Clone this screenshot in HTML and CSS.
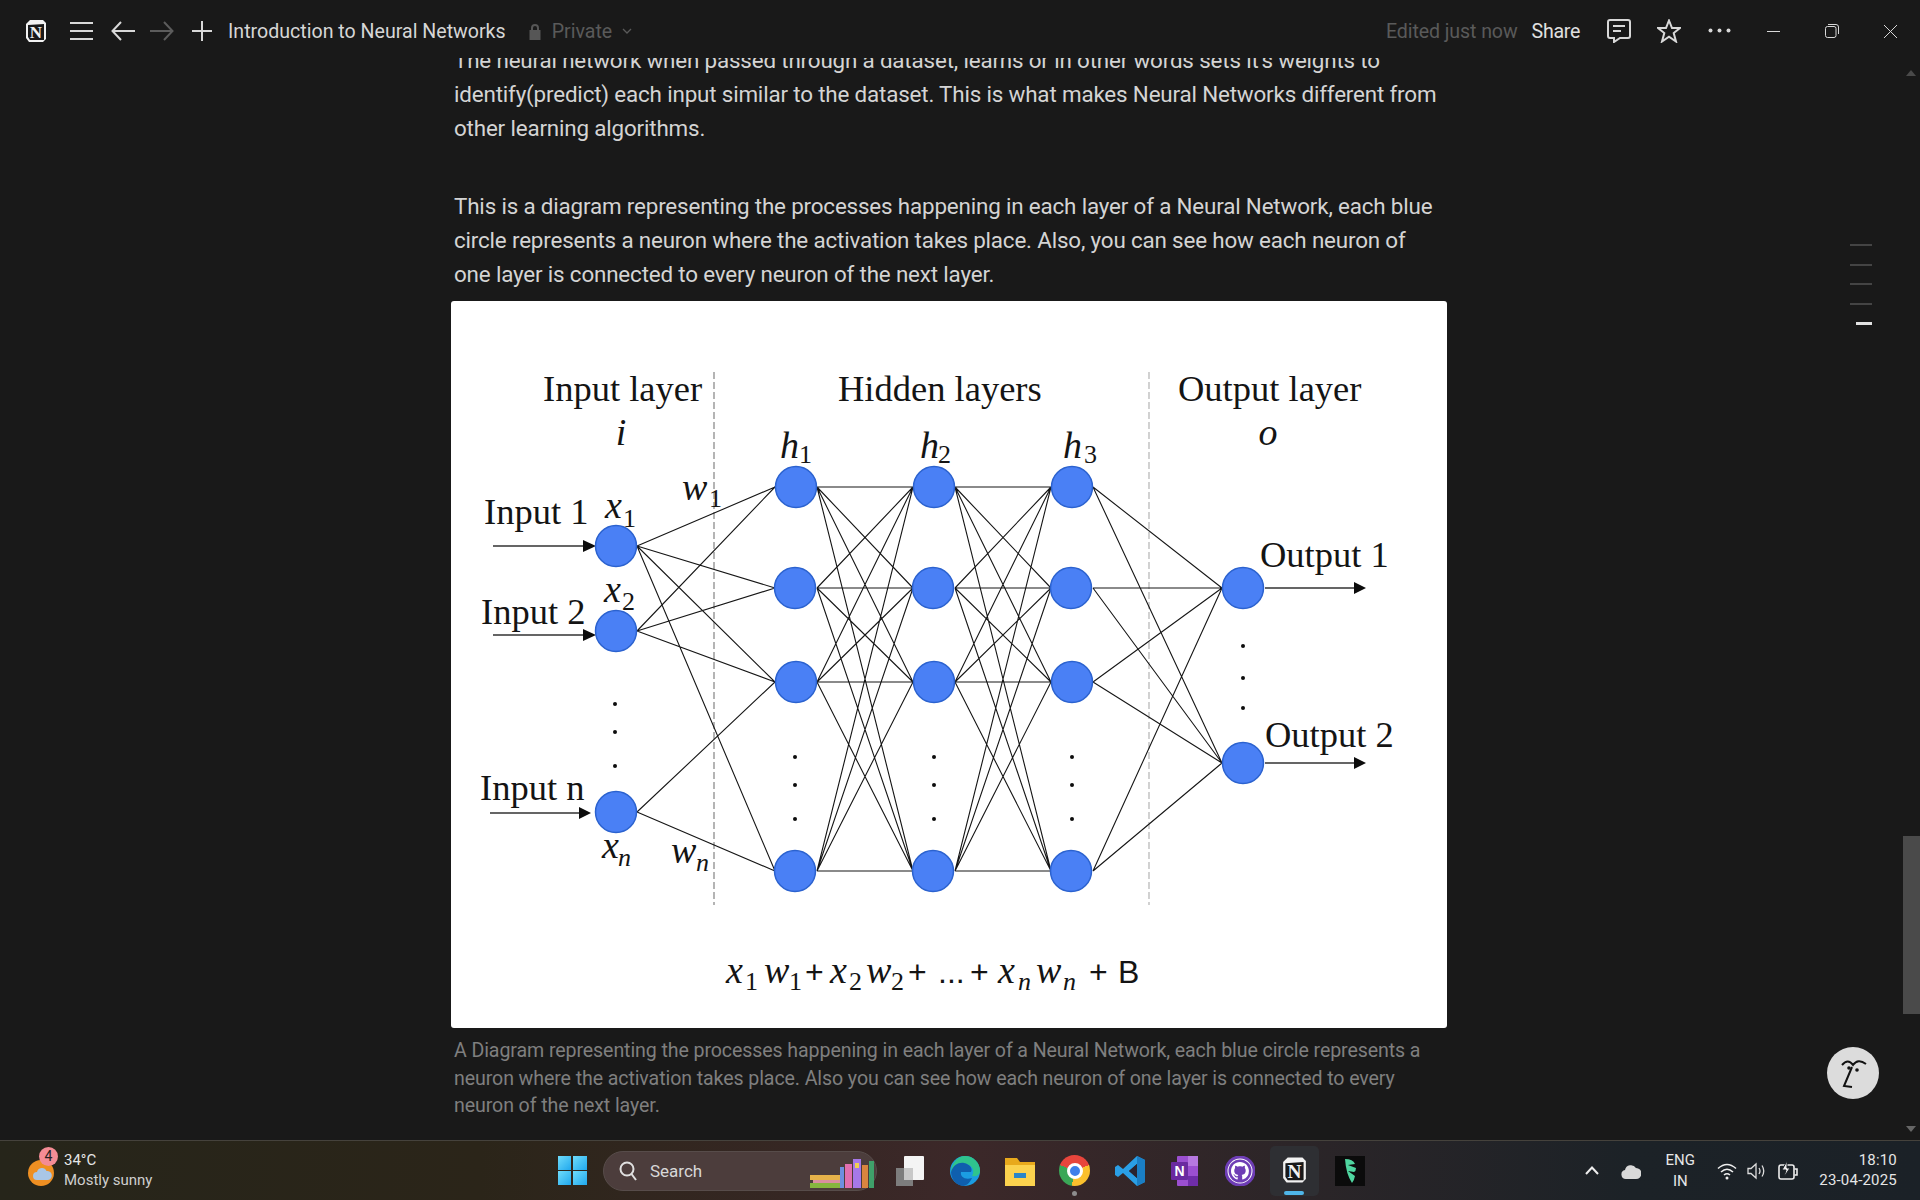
FILE: index.html
```html
<!DOCTYPE html>
<html lang="en">

<head>
    <meta charset="UTF-8">
    <meta name="viewport" content="width=device-width, initial-scale=1.0">
    <title>Introduction to Neural Networks</title>
    <link rel="stylesheet" href="styles.css">
</head>

<body>
    <div id="app">
        <header id="topbar">
            <svg class="ico ico-logo" viewBox="0 0 22 24">
                <path d="M1 5 L5 1 L18 1 L21 4 L21 20 L18 23 L4 23 L1 19 Z" fill="#f2f2f2" />
                <path d="M3 6 L19 5 L19 21 L5 21 L3 18 Z" fill="#191919" />
                <text x="11" y="19" class="logo-n">N</text>
            </svg>
            <svg class="ico ico-burger" viewBox="0 0 23 20">
                <path d="M0 2H23M0 10H23M0 18H23" />
            </svg>
            <svg class="ico ico-back" viewBox="0 0 24 20">
                <path d="M24 10H2M10 1L1.500 10L10 19" />
            </svg>
            <svg class="ico ico-fwd" viewBox="0 0 24 20">
                <path d="M0 10H22M14 1L22.500 10L14 19" />
            </svg>
            <svg class="ico ico-plus" viewBox="0 0 20 20">
                <path d="M10 0V20M0 10H20" />
            </svg>
            <span class="page-title">Introduction to Neural Networks</span>
            <svg class="ico-lock" viewBox="0 0 14 17">
                <path d="M3 7V5a4 4 0 0 1 8 0v2h1.500v10h-11V7Zm2 0h4V5a2 2 0 0 0-4 0Z" />
            </svg>
            <span class="private">Private</span>
            <svg class="ico ico-chev" viewBox="0 0 10 6">
                <path d="M1 1L5 5L9 1" />
            </svg>

            <div class="top-right">
                <span class="edited">Edited just now</span>
                <span class="share">Share</span>
                <svg class="ico ico-comment" viewBox="0 0 24 24">
                    <path d="M3 1H21Q23 1 23 3V17Q23 19 21 19H13L7 23V19H3Q1 19 1 17V3Q1 1 3 1Z" />
                    <path d="M6 7H18M6 12H14" />
                </svg>
                <svg class="ico ico-star" viewBox="0 0 24 24">
                    <path d="M12 1.500L15 9H23L16.700 14L19 22.500L12 17.600L5 22.500L7.300 14L1 9H9Z" />
                </svg>
                <svg class="ico-dots" viewBox="0 0 23 5">
                    <circle cx="2.500" cy="2.500" r="2" />
                    <circle cx="11.500" cy="2.500" r="2" />
                    <circle cx="20.500" cy="2.500" r="2" />
                </svg>
                <svg class="ico win-min" viewBox="0 0 13 13">
                    <path d="M0 6.500H13" />
                </svg>
                <svg class="ico win-max" viewBox="0 0 14 14">
                    <rect x="0.500" y="2.500" width="10.500" height="11" rx="2" />
                    <path d="M3 0.500H11Q13.500 0.500 13.500 3V10" />
                </svg>
                <svg class="ico win-close" viewBox="0 0 13 13">
                    <path d="M0 0L13 13M13 0L0 13" />
                </svg>
            </div>
        </header>

        <main id="main">
            <div id="scroller">
                <article id="doc">
                    <p class="para">The neural network when passed through a dataset, learns or in other words sets it's weights to identify(predict) each input similar to the dataset. This is what makes Neural Networks different from other learning algorithms.</p>
                    <p class="para para-next">This is a diagram representing the processes happening in each layer of a Neural Network, each blue circle represents a neuron where the activation takes place. Also, you can see how each neuron of one layer is connected to every neuron of the next layer.</p>

                    <figure class="figure">
                        <svg class="diagram" viewBox="451 301 996 727">
                            <path class="sep" d="M714 372V905" />
                            <path class="sep sep-thin" d="M1149 372V905" />

                            <g class="edges">
                                <path d="M637 546L775 487M637 546L775 588M637 546L775 682M637 546L775 871M637 631L775 487M637 631L775 588M637 631L775 682M637 812L775 682M637 812L775 871" />
                                <path d="M817 487L913 487M817 487L913 588M817 487L913 682M817 487L913 871M817 588L913 487M817 588L913 588M817 588L913 682M817 588L913 871M817 682L913 487M817 682L913 588M817 682L913 682M817 682L913 871M817 871L913 487M817 871L913 588M817 871L913 682M817 871L913 871" />
                                <path d="M955 487L1051 487M955 487L1051 588M955 487L1051 682M955 487L1051 871M955 588L1051 487M955 588L1051 588M955 588L1051 682M955 588L1051 871M955 682L1051 487M955 682L1051 588M955 682L1051 682M955 682L1051 871M955 871L1051 487M955 871L1051 588M955 871L1051 682M955 871L1051 871" />
                                <path d="M1093 487L1222 588M1093 487L1222 763M1093 588L1222 588M1093 588L1222 763M1093 682L1222 588M1093 682L1222 763M1093 871L1222 588M1093 871L1222 763" />
                            </g>

                            <g class="arrows">
                                <path d="M493 546H590M493 635H590M490 813H585M1265 588H1360M1265 763H1360" />
                            </g>
                            <g class="heads">
                                <path d="M583 540L596 546L583 552Z" />
                                <path d="M583 629L596 635L583 641Z" />
                                <path d="M579 807L591 813L579 819Z" />
                                <path d="M1354 582L1366 588L1354 594Z" />
                                <path d="M1354 757L1366 763L1354 769Z" />
                            </g>

                            <g class="node">
                                <circle cx="616" cy="546" r="20.500" />
                                <circle cx="616" cy="631" r="20.500" />
                                <circle cx="616" cy="812" r="20.500" />
                                <circle cx="796" cy="487" r="20.500" />
                                <circle cx="795" cy="588" r="20.500" />
                                <circle cx="796" cy="682" r="20.500" />
                                <circle cx="795" cy="871" r="20.500" />
                                <circle cx="934" cy="487" r="20.500" />
                                <circle cx="933" cy="588" r="20.500" />
                                <circle cx="934" cy="682" r="20.500" />
                                <circle cx="933" cy="871" r="20.500" />
                                <circle cx="1072" cy="487" r="20.500" />
                                <circle cx="1071" cy="588" r="20.500" />
                                <circle cx="1072" cy="682" r="20.500" />
                                <circle cx="1071" cy="871" r="20.500" />
                                <circle cx="1243" cy="588" r="20.500" />
                                <circle cx="1243" cy="763" r="20.500" />
                            </g>

                            <g class="dots">
                                <circle cx="615" cy="704" r="2" />
                                <circle cx="615" cy="732" r="2" />
                                <circle cx="615" cy="766" r="2" />
                                <circle cx="795" cy="757" r="2" />
                                <circle cx="795" cy="785" r="2" />
                                <circle cx="795" cy="819" r="2" />
                                <circle cx="934" cy="757" r="2" />
                                <circle cx="934" cy="785" r="2" />
                                <circle cx="934" cy="819" r="2" />
                                <circle cx="1072" cy="757" r="2" />
                                <circle cx="1072" cy="785" r="2" />
                                <circle cx="1072" cy="819" r="2" />
                                <circle cx="1243" cy="646" r="2" />
                                <circle cx="1243" cy="678" r="2" />
                                <circle cx="1243" cy="708" r="2" />
                            </g>

                            <g class="lbl">
                                <text x="543" y="401">Input layer</text>
                                <text x="838" y="401">Hidden layers</text>
                                <text x="1178" y="401">Output layer</text>
                                <text x="484" y="524">Input 1</text>
                                <text x="481" y="624">Input 2</text>
                                <text x="480" y="800">Input n</text>
                                <text x="1260" y="567">Output 1</text>
                                <text x="1265" y="747">Output 2</text>
                            </g>

                            <g class="math">
                                <text x="621" y="445" text-anchor="middle">i</text>
                                <text x="1268" y="445" text-anchor="middle">o</text>
                                <text x="780" y="458">h</text>
                                <text x="920" y="458">h</text>
                                <text x="1063" y="458">h</text>
                                <text x="605" y="518">x</text>
                                <text x="604" y="602">x</text>
                                <text x="602" y="858">x</text>
                                <text x="682" y="500">w</text>
                                <text x="671" y="863">w</text>
                            </g>
                            <g class="sub">
                                <text x="799" y="463">1</text>
                                <text x="938" y="463">2</text>
                                <text x="1084" y="463">3</text>
                                <text x="623" y="527">1</text>
                                <text x="622" y="610">2</text>
                                <text x="709" y="507">1</text>
                                <text class="sub-n" x="618" y="866">n</text>
                                <text class="sub-n" x="696" y="871">n</text>
                            </g>

                            <g class="math">
                                <text x="726" y="983">x</text>
                                <text x="764" y="983">w</text>
                                <text x="830" y="983">x</text>
                                <text x="866" y="983">w</text>
                                <text x="998" y="983">x</text>
                                <text x="1036" y="983">w</text>
                            </g>
                            <g class="sub">
                                <text x="745" y="990">1</text>
                                <text x="789" y="990">1</text>
                                <text x="849" y="990">2</text>
                                <text x="891" y="990">2</text>
                                <text class="sub-n" x="1018" y="990">n</text>
                                <text class="sub-n" x="1063" y="990">n</text>
                            </g>
                            <g class="formula">
                                <text x="805" y="983">+</text>
                                <text x="908" y="983">+</text>
                                <text x="938" y="983">...</text>
                                <text x="970" y="983">+</text>
                                <text x="1089" y="983">+</text>
                                <text x="1118" y="983">B</text>
                            </g>
                        </svg>
                    </figure>
                    <p class="caption">A Diagram representing the processes happening in each layer of a Neural Network, each blue circle represents a neuron where the activation takes place. Also you can see how each neuron of one layer is connected to every neuron of the next layer.</p>
                </article>
            </div>

            <aside id="rail">
                <span class="rail-up"></span>
                <span class="rail-thumb"></span>
                <span class="rail-down"></span>
            </aside>

            <!-- page outline, floats over the page -->
            <div class="outline">
                <i></i><i></i><i></i><i></i><i class="on"></i>
            </div>

            <div class="help">
                <svg viewBox="0 0 52 52">
                    <path d="M15 18Q21 11 26 18Q31 11 39 17" />
                    <path d="M25 20L17 39L25 40" />
                    <circle cx="22" cy="21" r="1.800" />
                    <circle cx="30" cy="23" r="1.800" />
                </svg>
            </div>
        </main>

        <footer id="taskbar">
            <div class="weather">
                <div class="weather-ico">
                    <svg viewBox="0 0 26 28">
                        <circle cx="13" cy="14" r="13" fill="#ee8f22" />
                        <path d="M9 21a4 4 0 0 1 0-8 5 5 0 0 1 9.500-1 4.500 4.500 0 0 1 1.500 9Z" fill="#a9c6e6" />
                    </svg>
                    <span class="badge">4</span>
                </div>
                <div class="weather-text">
                    <div class="temp">34°C</div>
                    <div class="cond">Mostly sunny</div>
                </div>
            </div>

            <div class="task task-win">
                <div class="winlogo"><i></i><i></i><i></i><i></i></div>
            </div>

            <div class="search">
                <svg class="search-ico" viewBox="0 0 18 20">
                    <circle cx="8" cy="8" r="6.500" />
                    <path d="M12.500 13L17 19" />
                </svg>
                <span>Search</span>
                <svg class="books" viewBox="0 0 66 30">
                    <rect x="0" y="17" width="32" height="5" fill="#e6b24a" />
                    <rect x="3" y="22" width="29" height="3" fill="#d98fa0" />
                    <rect x="0" y="25" width="32" height="5" fill="#86b63f" />
                    <rect x="30" y="9" width="4" height="21" fill="#6d8fe0" />
                    <rect x="35" y="6" width="7" height="24" fill="#e06fb0" />
                    <rect x="43" y="1" width="8" height="29" fill="#a678e8" />
                    <rect x="45" y="5" width="4" height="5" fill="#f0d050" />
                    <rect x="52" y="7" width="6" height="23" fill="#d9853f" />
                    <rect x="59" y="3" width="5" height="27" fill="#3fa06a" />
                </svg>
            </div>

            <div class="task">
                <svg class="app" viewBox="0 0 28 30">
                    <rect x="0" y="12" width="17" height="18" fill="#7d7d7d" />
                    <rect x="8" y="0" width="20" height="24" rx="1" fill="#f4f4f4" />
                    <rect x="8" y="12" width="9" height="12" fill="#c8c8c8" />
                </svg>
            </div>
            <div class="task">
                <svg class="app" viewBox="0 0 30 30">
                    <circle cx="15" cy="15" r="15" fill="#1b9de2" />
                    <path d="M15 0A15 15 0 0 1 30 15C30 19 26 21 22 20C26 13 20 7 13 8C8 9 4 12 1 17C1 8 7 0 15 0Z" fill="#2fc48d" />
                    <path d="M1 16C3 9 9 6 14 7C20 8 23 13 21 16H11C10 21 15 24 22 22C20 27 16 30 13 30C6 29 1 23 1 16Z" fill="#0f5fae" />
                </svg>
            </div>
            <div class="task">
                <svg class="app" viewBox="0 0 30 30">
                    <path d="M0 2H12L15 6H30V30H0Z" fill="#e8a91c" />
                    <rect x="0" y="9" width="30" height="21" fill="#fbd24e" />
                    <rect x="9" y="17" width="12" height="5" fill="#2a86c8" />
                </svg>
            </div>
            <div class="task task-dot">
                <div class="chrome"><i></i></div>
                <span class="run-dot"></span>
            </div>
            <div class="task">
                <svg class="app" viewBox="0 0 30 30">
                    <path d="M22 0L30 4V26L22 30L8 17L3 21L0 19V11L3 9L8 13ZM22 8L14 15L22 22Z" fill="#2a9fe6" />
                    <path d="M22 0L30 4V26L22 30Z" fill="#1a7ec4" />
                    <path d="M22 8L14 15L22 22Z" fill="#2a2430" />
                </svg>
            </div>
            <div class="task">
                <svg class="app" viewBox="0 0 30 30">
                    <rect x="7" y="0" width="21" height="30" rx="1" fill="#9b4fd0" />
                    <rect x="18" y="0" width="10" height="10" fill="#b678e0" />
                    <rect x="18" y="20" width="10" height="10" fill="#6f2da8" />
                    <rect x="1" y="6" width="17" height="18" rx="1" fill="#6a2aa0" />
                    <text x="9.500" y="20" class="onenote-n">N</text>
                </svg>
            </div>
            <div class="task">
                <svg class="app" viewBox="0 0 30 30">
                    <circle cx="15" cy="15" r="14" fill="#fff" stroke="#6e3db5" stroke-width="3" />
                    <circle cx="15" cy="15" r="11.500" fill="#6e3db5" />
                    <path transform="translate(6 6) scale(1.120)" fill="#fff" d="M8 0C3.580 0 0 3.580 0 8c0 3.540 2.290 6.530 5.470 7.590.4.070.55-.17.55-.38 0-.19-.01-.82-.01-1.490-2.010.37-2.530-.49-2.690-.94-.09-.23-.48-.94-.82-1.130-.28-.15-.68-.52-.01-.53.63-.01 1.080.58 1.230.82.720 1.210 1.870.87 2.330.66.070-.52.28-.87.51-1.070-1.780-.2-3.640-.89-3.640-3.950 0-.87.31-1.590.82-2.150-.08-.2-.36-1.020.08-2.120 0 0 .67-.21 2.200.82.64-.18 1.320-.27 2-.27.68 0 1.360.09 2 .27 1.530-1.040 2.200-.82 2.200-.82.44 1.100.16 1.920.08 2.120.51.56.82 1.270.82 2.150 0 3.070-1.870 3.750-3.650 3.950.29.25.54.73.54 1.480 0 1.070-.01 1.930-.01 2.200 0 .21.15.46.55.38A8.013 8.013 0 0016 8c0-4.420-3.580-8-8-8z" />
                </svg>
            </div>
            <div class="task task-active">
                <svg class="app-notion" viewBox="0 0 22 24">
                    <path d="M1 5 L5 1 L18 1 L21 4 L21 20 L18 23 L4 23 L1 19 Z" fill="#f2f2f2" />
                    <path d="M3 6 L19 5 L19 21 L5 21 L3 18 Z" fill="#191919" />
                    <text x="11" y="19" class="logo-n">N</text>
                </svg>
                <span class="active-bar"></span>
            </div>
            <div class="task">
                <svg class="app" viewBox="0 0 30 30">
                    <rect width="30" height="30" fill="#0b0b0b" />
                    <path d="M10 3Q18 3 20 8L13 9L21 12Q21 15 19 16L13 15L20 20Q19 25 17 27Q11 18 10 3Z" fill="#4fd6a0" />
                </svg>
            </div>

            <div class="tray">
                <svg class="tray-chev" viewBox="0 0 14 9">
                    <path d="M1 8L7 1.500L13 8" />
                </svg>
                <svg class="tray-cloud" viewBox="0 0 20 16">
                    <path d="M5 16a4.500 4.500 0 0 1-1-8.900A6 6 0 0 1 15 5a5.500 5.500 0 0 1 0 11Z" />
                </svg>
                <div class="lang"><div>ENG</div><div>IN</div></div>
                <svg class="tray-wifi" viewBox="0 0 20 18">
                    <path d="M1 6.500Q10-1.500 19 6.500M4 10Q10 4.500 16 10M7 13Q10 10.500 13 13" />
                    <circle cx="10" cy="16" r="1.500" />
                </svg>
                <svg class="tray-vol" viewBox="0 0 19 18">
                    <path d="M1 6.500H4L9 2V16L4 11.500H1Z" />
                    <path d="M12 6Q14 9 12 12M15 3.500Q18.500 9 15 14.500" />
                </svg>
                <svg class="tray-batt" viewBox="0 0 20 20">
                    <rect x="1" y="4" width="15" height="14" rx="2" />
                    <path d="M16.500 8H19V14H16.500" />
                    <path class="bolt" d="M9 0L4 9H8L6 16L12 7H9Z" />
                </svg>
                <div class="clock"><div>18:10</div><div>23-04-2025</div></div>
            </div>
        </footer>
    </div>
</body>

</html>
```

FILE: styles.css
```css
/* reset start */
* {
    padding: 0;
    margin: 0;
    box-sizing: border-box;
}

html,
body {
    width: 100%;
    height: 100%;
}

body {
    overflow: hidden;
    background-color: #191919;
    font-family: Roboto, "Noto Sans", sans-serif;
}

/* reset end */
#app {
    width: 100%;
    height: 100%;
    display: flex;
    flex-direction: column;
}

.ico {
    fill: none;
    stroke: #d8d8d8;
    stroke-width: 2;
    flex: none;
}

/* top bar */
#topbar {
    height: 58px;
    flex: none;
    display: flex;
    align-items: center;
    padding: 4px 23px 0 25px;
    color: #d6d6d6;
    font-size: 19.600px;
}

.logo-n {
    font-family: "Liberation Serif", serif;
    font-weight: 700;
    font-size: 17px;
    fill: #f2f2f2;
    stroke: none;
    text-anchor: middle;
}

.ico-logo {
    width: 22px;
    height: 24px;
    stroke: none;
    fill: none;
}

.ico-burger {
    width: 23px;
    height: 20px;
    margin-left: 23px;
}

.ico-back {
    width: 24px;
    height: 20px;
    margin-left: 18px;
}

.ico-fwd {
    width: 24px;
    height: 20px;
    margin-left: 15px;
    stroke: #5c5c5c;
}

.ico-plus {
    width: 20px;
    height: 20px;
    margin-left: 18px;
}

.page-title {
    margin-left: 16px;
    white-space: nowrap;
}

.ico-lock {
    width: 14px;
    height: 17px;
    margin-left: 22px;
    fill: #565656;
}

.private {
    margin-left: 10px;
    color: #5a5a5a;
}

.ico-chev {
    width: 10px;
    height: 6px;
    margin-left: 10px;
    stroke: #5a5a5a;
    stroke-width: 1.300;
}

.top-right {
    margin-left: auto;
    display: flex;
    align-items: center;
}

.edited {
    color: #5a5a5a;
    letter-spacing: -0.100px;
}

.share {
    margin-left: 14px;
    color: #e0e0e0;
    letter-spacing: -0.300px;
}

.ico-comment {
    width: 24px;
    height: 24px;
    margin-left: 27px;
}

.ico-star {
    width: 24px;
    height: 24px;
    margin-left: 26px;
}

.ico-dots {
    width: 23px;
    height: 5px;
    margin-left: 27px;
    margin-top: -2px;
    fill: #d8d8d8;
}

.win-min {
    width: 13px;
    height: 13px;
    margin-left: 36px;
    stroke-width: 1;
}

.win-max {
    width: 14px;
    height: 14px;
    margin-left: 45px;
    stroke-width: 1;
}

.win-close {
    width: 13px;
    height: 13px;
    margin-left: 45px;
    stroke-width: 1;
}

/* page */
#main {
    flex: 1;
    min-height: 0;
    display: flex;
    position: relative;
}

#scroller {
    flex: 1;
    overflow: hidden;
}

#doc {
    width: 996px;
    margin: -15px 0 0 451px;
}

.para {
    padding: 0 3px;
    font-size: 22.400px;
    line-height: 34px;
    letter-spacing: -0.170px;
    color: #d4d4d4;
}

.para-next {
    margin-top: 44px;
}

.figure {
    margin-top: 10px;
    background-color: #fff;
    border-radius: 3px;
    height: 727px;
}

.diagram {
    display: block;
    width: 996px;
    height: 727px;
}

.sep {
    fill: none;
    stroke: #b4b4b4;
    stroke-width: 2;
    stroke-dasharray: 7 3;
}

.sep-thin {
    stroke-width: 1.200;
}

.edges path {
    fill: none;
    stroke: #161616;
    stroke-width: 1.100;
}

.arrows path {
    fill: none;
    stroke: #333;
    stroke-width: 1.500;
}

.heads path,
.dots circle {
    fill: #0c0c0c;
}

.node circle {
    fill: #4a80f5;
    stroke: #2b62cf;
    stroke-width: 1.500;
}

.lbl text {
    font-family: "Liberation Serif", serif;
    font-size: 36.500px;
    fill: #141414;
}

.math text {
    font-family: "Liberation Serif", serif;
    font-style: italic;
    font-size: 38px;
    fill: #141414;
}

.sub text {
    font-family: "Liberation Serif", serif;
    font-size: 26px;
    fill: #141414;
}

.sub .sub-n {
    font-style: italic;
}

.formula text {
    font-family: "Liberation Sans", sans-serif;
    font-size: 32px;
    fill: #141414;
}

.caption {
    margin-top: 9px;
    padding: 0 3px;
    font-size: 19.600px;
    line-height: 27.600px;
    letter-spacing: -0.100px;
    color: #7f7f7f;
}

/* scrollbar */
#rail {
    width: 18px;
    flex: none;
    display: flex;
    flex-direction: column;
    align-items: center;
}

.rail-up,
.rail-down {
    width: 0;
    height: 0;
    border-left: 5px solid transparent;
    border-right: 5px solid transparent;
}

.rail-up {
    margin-top: 12px;
    border-bottom: 6px solid #4a4a4a;
}

.rail-thumb {
    width: 17px;
    height: 178px;
    margin-top: 760px;
    background-color: #4a4a4a;
}

.rail-down {
    margin-top: 112px;
    border-top: 6px solid #666;
}

.outline {
    position: absolute;
    left: 1850px;
    top: 186px;
    width: 22px;
    display: flex;
    flex-direction: column;
    align-items: flex-end;
    gap: 17.500px;
}

.outline i {
    display: block;
    width: 22px;
    height: 2px;
    background-color: #444;
}

.outline .on {
    width: 16px;
    height: 3px;
    background-color: #e2e2e2;
}

.help {
    position: absolute;
    left: 1827px;
    top: 989px;
    width: 52px;
    height: 52px;
    border-radius: 50%;
    background-color: #dcdcdc;
}

.help svg {
    display: block;
    width: 52px;
    height: 52px;
    fill: none;
    stroke: #111;
    stroke-width: 2;
}

.help circle {
    fill: #111;
    stroke: none;
}

/* taskbar */
#taskbar {
    height: 60px;
    flex: none;
    display: flex;
    align-items: center;
    padding: 0 23px 0 28px;
    border-top: 1px solid #45423c;
    background: linear-gradient(90deg, #26251a 0%, #2b2519 25%, #3c2829 50%, #2b2528 68%, #1c2227 85%, #1b2127 100%);
    color: #e6e6e6;
}

.weather {
    width: 519px;
    flex: none;
    display: flex;
    align-items: center;
}

.weather-ico {
    position: relative;
    width: 26px;
    height: 28px;
    margin-top: 5px;
}

.weather-ico svg {
    display: block;
    width: 26px;
    height: 28px;
}

.badge {
    position: absolute;
    left: 11px;
    top: -12px;
    width: 19px;
    height: 19px;
    border-radius: 50%;
    background-color: #f48c95;
    color: #222;
    font-size: 14px;
    line-height: 19px;
    text-align: center;
}

.weather-text {
    margin: -2px 0 0 10px;
    font-size: 15px;
    line-height: 20px;
}

.cond {
    color: #cfcfcf;
}

.task {
    width: 55px;
    height: 50px;
    flex: none;
    display: flex;
    align-items: center;
    justify-content: center;
    position: relative;
}

.task-win {
    width: 50px;
}

.winlogo {
    width: 29px;
    height: 29px;
    display: grid;
    grid-template-columns: 1fr 1fr;
    gap: 1.500px;
}

.winlogo i {
    background: linear-gradient(135deg, #6fdcfb, #20a8ee);
}

.search {
    width: 274px;
    height: 40px;
    flex: none;
    margin: 0 5px 0 6px;
    padding-left: 15px;
    display: flex;
    align-items: center;
    border-radius: 20px;
    border: 1px solid #574c4a;
    background-color: #4c3d3c;
    color: #d8d8d8;
    font-size: 17px;
    position: relative;
}

.search-ico {
    width: 18px;
    height: 20px;
    margin-right: 13px;
    fill: none;
    stroke: #e0e0e0;
    stroke-width: 2;
}

.books {
    position: absolute;
    right: 0;
    bottom: 2px;
    width: 66px;
    height: 30px;
}

.app {
    width: 30px;
    height: 30px;
}

.chrome {
    width: 31px;
    height: 31px;
    border-radius: 50%;
    background: conic-gradient(from 290deg, #e8453c 0deg 140deg, #fbc02d 140deg 260deg, #3aa757 260deg 360deg);
    display: flex;
    align-items: center;
    justify-content: center;
}

.chrome i {
    width: 16px;
    height: 16px;
    border-radius: 50%;
    background-color: #3f7fea;
    border: 3px solid #fff;
}

.run-dot {
    position: absolute;
    left: 25px;
    bottom: 0;
    width: 5px;
    height: 5px;
    border-radius: 50%;
    background-color: #8d8d8d;
}

.task-active {
    width: 49px;
    margin: 0 3px;
    border-radius: 5px;
    background-color: #2e2f33;
}

.app-notion {
    width: 25px;
    height: 30px;
    margin-top: -2px;
}

.active-bar {
    position: absolute;
    left: 14px;
    bottom: 1px;
    width: 20px;
    height: 4px;
    border-radius: 2px;
    background-color: #4fb5e8;
}

.onenote-n {
    font-family: "Liberation Sans", sans-serif;
    font-size: 14px;
    font-weight: 700;
    fill: #fff;
    text-anchor: middle;
}

.tray {
    margin-left: auto;
    display: flex;
    align-items: center;
}

.tray-chev {
    width: 14px;
    height: 9px;
    fill: none;
    stroke: #eee;
    stroke-width: 2;
}

.tray-cloud {
    width: 20px;
    height: 16px;
    margin-left: 22px;
    fill: #d9d9d9;
}

.lang {
    width: 40px;
    margin-left: 19px;
    text-align: center;
    font-size: 15px;
    line-height: 21px;
}

.tray-wifi {
    width: 20px;
    height: 18px;
    margin-left: 17px;
    fill: #eee;
    stroke: none;
}

.tray-wifi path {
    fill: none;
    stroke: #eee;
    stroke-width: 1.600;
}

.tray-vol {
    width: 19px;
    height: 18px;
    margin-left: 10px;
    fill: none;
    stroke: #ddd;
    stroke-width: 1.300;
}

.tray-batt {
    width: 20px;
    height: 20px;
    margin-left: 12px;
    fill: none;
    stroke: #eee;
    stroke-width: 1.600;
}

.tray-batt .bolt {
    fill: #eee;
    stroke: #1c2227;
    stroke-width: 1;
}

.clock {
    margin: -2px 0 0 21px;
    text-align: right;
    font-size: 15px;
    line-height: 20px;
    letter-spacing: 0.200px;
}
```
